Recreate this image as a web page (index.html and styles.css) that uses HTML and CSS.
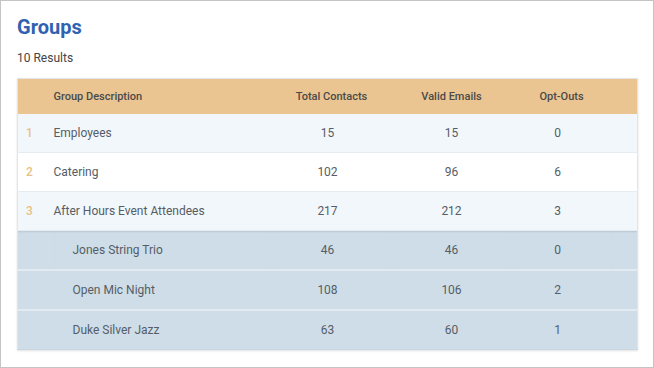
FILE: index.html
```html
<!DOCTYPE html>
<html>
<head>
<meta charset="utf-8">
<link rel="stylesheet" href="styles.css">
</head>
<body>
<div class="page">
  <h1 class="title">Groups</h1>
  <div class="count">10 Results</div>
  <table class="grid">
    <colgroup>
      <col class="c-num"><col class="c-desc"><col class="c-tc"><col class="c-ve"><col class="c-oo"><col class="c-end">
    </colgroup>
    <thead>
      <tr><th></th><th class="left">Group Description</th><th>Total Contacts</th><th>Valid Emails</th><th>Opt-Outs</th><th></th></tr>
    </thead>
    <tbody>
      <tr class="odd"><td class="num">1</td><td class="left">Employees</td><td class="tc">15</td><td>15</td><td class="oo">0</td><td></td></tr>
      <tr class="even"><td class="num">2</td><td class="left">Catering</td><td class="tc">102</td><td>96</td><td class="oo">6</td><td></td></tr>
      <tr class="odd"><td class="num">3</td><td class="left">After Hours Event Attendees</td><td class="tc">217</td><td>212</td><td class="oo">3</td><td></td></tr>
      <tr class="sub first"><td></td><td class="left sublabel">Jones String Trio</td><td class="tc">46</td><td>46</td><td class="oo">0</td><td></td></tr>
      <tr class="sub"><td></td><td class="left sublabel">Open Mic Night</td><td class="tc">108</td><td>106</td><td class="oo">2</td><td></td></tr>
      <tr class="sub last"><td></td><td class="left sublabel">Duke Silver Jazz</td><td class="tc">63</td><td>60</td><td class="oo">1</td><td></td></tr>
    </tbody>
  </table>
</div>
</body>
</html>
```
FILE: styles.css
```css
html, body {
  margin: 0;
  padding: 0;
  background: #ffffff;
}
.page {
  box-sizing: border-box;
  width: 654px;
  height: 368px;
  border: 1px solid #c4c4c4;
  padding: 13px 16px 0 16px;
  font-family: Roboto, "Liberation Sans", sans-serif;
  color: #555d66;
}
.title {
  margin: 0;
  font-size: 20px;
  line-height: 26px;
  font-weight: 700;
  color: #2f62b0;
}
.count {
  margin-top: 11px;
  font-size: 12px;
  line-height: 14px;
  color: #444444;
}
.grid {
  margin-top: 13px;
  width: 620px;
  border-collapse: collapse;
  table-layout: fixed;
  box-shadow: 0 1px 2px rgba(0,0,0,0.12);
  border: 1px solid #e4e4e4;
}
.c-num { width: 36px; }
.c-desc { width: 218px; }
.c-tc { width: 120px; }
.c-ve { width: 120px; }
.c-oo { width: 100px; }
.c-end { width: 26px; }
thead th {
  background: #eac591;
  height: 35px;
  padding: 0;
  font-size: 11px;
  font-weight: 500;
  color: #4a4a4a;
  text-align: center;
}
th.left, td.left { text-align: left; }
tbody td {
  height: 38px;
  padding: 0;
  font-size: 12px;
  font-weight: 400;
  text-align: center;
  color: #555d66;
}
tbody td.tc { padding-right: 8px; }
tbody td.oo { padding-right: 8px; }
tr.odd td { background: #f2f7fb; border-bottom: 1px solid #e6ebef; }
tr.even td { background: #ffffff; border-bottom: 1px solid #e6ebef; }
td.num {
  color: #ebbf84;
  font-weight: 500;
  text-align: left;
  padding-left: 8px;
}
tr.sub td {
  background: #cedde8;
  height: 38px;
  border-bottom: 2px solid #e2e9ef;
}
tr.sub.first td {
  box-shadow: inset 0 2px 2px -1px rgba(0,0,0,0.10);
}
tr.sub.last td {
  border-bottom: 1px solid #c8d6e2;
}
td.sublabel { padding-left: 19px; }
```
